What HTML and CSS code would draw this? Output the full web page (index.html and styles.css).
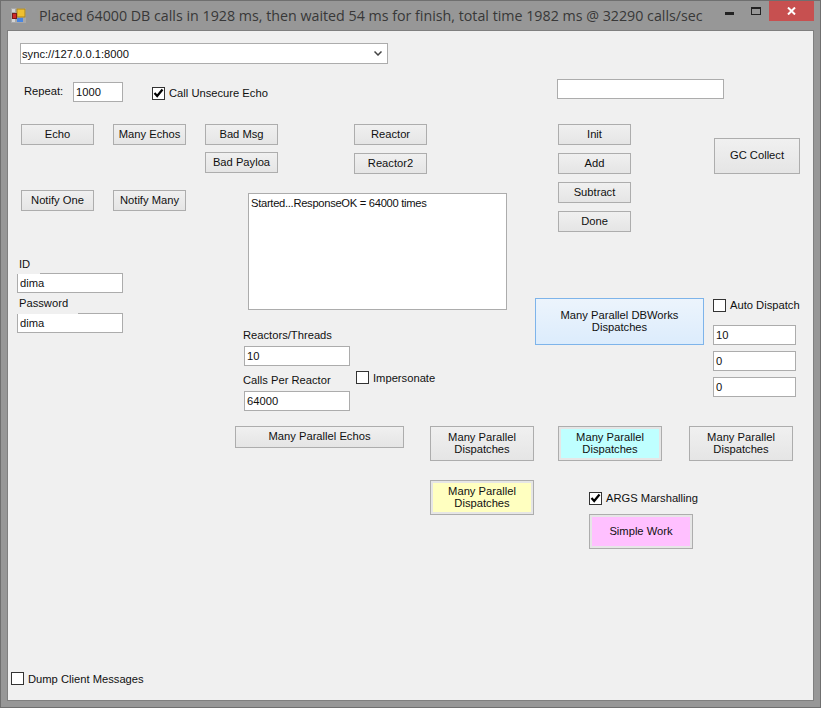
FILE: index.html
```html
<!DOCTYPE html>
<html lang="en">
<head>
    <meta charset="UTF-8">
    <title>DB calls</title>
    <link rel="stylesheet" href="styles.css">
</head>
<body>
    <div class="window">
        <div class="titlebar">
            <svg class="app-icon" width="15" height="15" viewBox="0 0 15 15">
                <rect x="0" y="0" width="15" height="15" fill="#a8a8a8"/>
                <rect x="1" y="1" width="3" height="3" fill="#d4d4d4"/>
                <rect x="1" y="11" width="3" height="3" fill="#d4d4d4"/>
                <rect x="6" y="11" width="3" height="3" fill="#4a86e0"/>
                <rect x="6" y="1" width="8" height="8" fill="#f0c030" stroke="#a88420" stroke-width="1"/>
                <rect x="1.5" y="5.5" width="4" height="5" fill="#d02828" stroke="#7a1a1a" stroke-width="1"/>
                <rect x="6" y="10" width="6" height="4" fill="#4a86e0"/>
            </svg>
            <span class="title-text">Placed 64000 DB calls in 1928 ms, then waited 54 ms for finish, total time 1982 ms @ 32290 calls/sec</span>
            <div class="caption-btns">
                <svg class="cap-min" width="9" height="3" viewBox="0 0 9 3"><rect width="9" height="3" fill="#222"/></svg>
                <svg class="cap-max" width="10" height="8" viewBox="0 0 10 8"><rect x="0.5" y="0.5" width="9" height="7" fill="none" stroke="#222"/><rect x="0" y="0" width="10" height="2" fill="#222"/></svg>
                <div class="cap-close">
                    <svg width="9" height="8" viewBox="0 0 9 8"><path d="M1 0.5 L8 7.5 M8 0.5 L1 7.5" stroke="#fff" stroke-width="2"/></svg>
                </div>
            </div>
        </div>

        <div class="client">
            <div class="combo">
                <span>sync://127.0.0.1:8000</span>
                <svg width="8" height="5" viewBox="0 0 8 5"><path d="M0.5 0.5 L4 4 L7.5 0.5" fill="none" stroke="#444" stroke-width="1.5"/></svg>
            </div>

            <div class="main">
                <div class="left-pane">
                    <div class="repeat-row">
                        <span class="repeat-label">Repeat:</span>
                        <input class="field repeat-input" type="text" value="1000">
                        <label class="check unsecure">
                            <span class="box"><svg width="11" height="10" viewBox="0 0 11 10"><path d="M1.5 5 L4.2 8 L9.5 1.5" fill="none" stroke="#000" stroke-width="2.2"/></svg></span>
                            Call Unsecure Echo
                        </label>
                    </div>

                    <div class="button-row">
                        <button class="btn small">Echo</button>
                        <button class="btn small">Many Echos</button>
                        <div class="stack bad">
                            <button class="btn small">Bad Msg</button>
                            <button class="btn small">Bad Payloa</button>
                        </div>
                        <div class="stack reactor">
                            <button class="btn small">Reactor</button>
                            <button class="btn small">Reactor2</button>
                        </div>
                    </div>

                    <div class="lower">
                        <div class="creds">
                            <div class="notify-row">
                                <button class="btn small">Notify One</button>
                                <button class="btn small">Notify Many</button>
                            </div>
                            <div class="cred-label first">ID</div>
                            <input class="field cred-input" type="text" value="dima">
                            <div class="cred-label pass">Password</div>
                            <input class="field cred-input" type="text" value="dima">
                        </div>
                        <div class="output">
                            <textarea class="log" readonly>Started...ResponseOK = 64000 times</textarea>
                            <div class="reactors">
                                <div>
                                    <div class="react-label">Reactors/Threads</div>
                                    <input class="field react-input" type="text" value="10">
                                    <div class="react-label second">Calls Per Reactor</div>
                                    <input class="field react-input" type="text" value="64000">
                                </div>
                                <label class="check impersonate"><span class="box"></span>Impersonate</label>
                            </div>
                        </div>
                    </div>
                </div>

                <div class="right-pane">
                    <input class="field top-input" type="text">
                    <div class="ops">
                        <div class="ops-col">
                            <button class="btn small">Init</button>
                            <button class="btn small">Add</button>
                            <button class="btn small">Subtract</button>
                            <button class="btn small">Done</button>
                        </div>
                        <button class="btn gc">GC Collect</button>
                    </div>
                    <div class="dbworks">
                        <button class="btn blue">Many Parallel DBWorks<br>Dispatches</button>
                        <div class="auto-col">
                            <label class="check auto"><span class="box"></span>Auto Dispatch</label>
                            <input class="field auto-input" type="text" value="10">
                            <input class="field auto-input" type="text" value="0">
                            <input class="field auto-input" type="text" value="0">
                        </div>
                    </div>
                </div>
            </div>

            <div class="parallel-row">
                <button class="btn wide">Many Parallel Echos</button>
                <button class="btn par">Many Parallel<br>Dispatches</button>
                <button class="btn par cyan">Many Parallel<br>Dispatches</button>
                <button class="btn par">Many Parallel<br>Dispatches</button>
            </div>

            <div class="work-row">
                <button class="btn par yellow">Many Parallel<br>Dispatches</button>
                <div class="work-col">
                    <label class="check args">
                        <span class="box"><svg width="11" height="10" viewBox="0 0 11 10"><path d="M1.5 5 L4.2 8 L9.5 1.5" fill="none" stroke="#000" stroke-width="2.2"/></svg></span>
                        ARGS Marshalling
                    </label>
                    <button class="btn par pink">Simple Work</button>
                </div>
            </div>

            <label class="check dump"><span class="box"></span>Dump Client Messages</label>
        </div>
    </div>
</body>
</html>
```

FILE: styles.css
```css
html, body {
    margin: 0;
    padding: 0;
}

body {
    width: 821px;
    height: 708px;
    overflow: hidden;
    font-family: 'Liberation Sans', Arial, sans-serif;
    font-size: 11.2px;
    color: #101010;
}

.window {
    box-sizing: border-box;
    width: 821px;
    height: 708px;
    background-color: #979797;
    border: 1px solid #6f6f6f;
    display: flex;
    flex-direction: column;
}

.titlebar {
    display: flex;
    align-items: flex-start;
    height: 29px;
    flex: none;
}

.app-icon {
    margin: 7px 0 0 10px;
}

.title-text {
    margin: 4px 0 0 13px;
    font-family: 'Open Sans', sans-serif;
    font-size: 14.25px;
    line-height: 22px;
    color: #383838;
    white-space: nowrap;
}

.caption-btns {
    margin-left: auto;
    margin-right: 6px;
    display: flex;
    align-items: flex-start;
}

.cap-min {
    margin: 11px 17px 0 0;
}

.cap-max {
    margin: 6px 8px 0 0;
}

.cap-close {
    width: 45px;
    height: 20px;
    background-color: #c75050;
    display: flex;
    align-items: center;
    justify-content: center;
}

.client {
    box-sizing: border-box;
    flex: none;
    width: 807px;
    height: 671px;
    margin-left: 6px;
    background-color: #f0f0f0;
    border: 1px solid #7f7f7f;
    display: flex;
    flex-direction: column;
}

.combo {
    box-sizing: border-box;
    width: 368px;
    height: 21px;
    margin: 12px 0 0 12px;
    padding: 0 5px 0 1px;
    background-color: #fff;
    border: 1px solid #acacac;
    display: flex;
    align-items: center;
    justify-content: space-between;
    flex: none;
}

.main {
    display: flex;
    margin-top: 15px;
    flex: none;
}

.left-pane {
    width: 527px;
    flex: none;
}

.field {
    box-sizing: border-box;
    display: block;
    margin: 0;
    padding: 0 2px;
    background-color: #fff;
    border: 1px solid #acacac;
    font-family: inherit;
    font-size: 11.2px;
    color: #101010;
    outline: none;
    height: 20px;
}

.btn {
    box-sizing: border-box;
    display: block;
    margin: 0;
    padding: 0 0 2px;
    font-family: inherit;
    font-size: 11.2px;
    line-height: 12px;
    color: #101010;
    border: 1px solid #adadad;
    background: linear-gradient(#f0f0f0, #e5e5e5);
    text-align: center;
}

.small {
    width: 73px;
    height: 21px;
}

.check {
    display: flex;
    align-items: center;
    white-space: nowrap;
}

.box {
    box-sizing: border-box;
    width: 13px;
    height: 13px;
    margin-right: 4px;
    flex: none;
    background-color: #fff;
    border: 1px solid #333;
    display: flex;
    align-items: center;
    justify-content: center;
}

.repeat-row {
    display: flex;
    align-items: center;
    margin-top: 3px;
    height: 20px;
    padding-left: 16px;
}

.repeat-label {
    width: 49px;
    margin-top: -2px;
}

.repeat-input {
    width: 50px;
}

.unsecure {
    margin: 2px 0 0 29px;
}

.button-row {
    display: flex;
    align-items: flex-start;
    margin-top: 22px;
    padding-left: 13px;
    height: 66px;
}

.button-row > .btn + .btn {
    margin-left: 19px;
}

.stack {
    display: flex;
    flex-direction: column;
    gap: 7px;
}

.bad {
    margin-left: 19px;
}

.reactor {
    margin-left: 76px;
    gap: 8px;
}

.lower {
    display: flex;
    padding-left: 9px;
}

.creds {
    width: 169px;
    flex: none;
}

.notify-row {
    display: flex;
    gap: 19px;
    padding-left: 4px;
}

/* the label sits a pixel over the field below it and hides its top border */
.cred-label {
    position: relative;
    width: fit-content;
    padding: 0 2px;
    height: 15px;
    line-height: 14px;
    margin-top: 3px;
    margin-bottom: -1px;
    background-color: #f0f0f0;
}

.cred-label.first {
    margin-top: 46px;
    height: 17px;
    padding-right: 10px;
}

.cred-label.pass {
    height: 18px;
    padding-right: 10px;
}

.cred-input {
    width: 106px;
}

.output {
    margin-left: 57px;
}

.log {
    box-sizing: border-box;
    display: block;
    width: 259px;
    height: 117px;
    margin: 3px 0 0 5px;
    padding: 3px 2px;
    font-family: inherit;
    font-size: 11.2px;
    letter-spacing: -0.3px;
    color: #101010;
    background-color: #fff;
    border: 1px solid #acacac;
    resize: none;
    overflow: hidden;
    outline: none;
}

.reactors {
    display: flex;
    align-items: flex-start;
}

.react-label {
    height: 14px;
    line-height: 14px;
    margin-top: 18px;
}

.react-label.second {
    margin-top: 7px;
}

.react-input {
    width: 106px;
    margin: 4px 0 0 1px;
}

.impersonate {
    margin: 61px 0 0 6px;
}

.right-pane {
    flex: 1;
}

.top-input {
    width: 167px;
    margin-left: 22px;
}

.ops {
    display: flex;
    align-items: flex-start;
    margin-top: 25px;
    padding-left: 23px;
}

.ops-col {
    display: flex;
    flex-direction: column;
    gap: 8px;
}

.gc {
    width: 86px;
    height: 36px;
    margin: 14px 0 0 83px;
}

.dbworks {
    display: flex;
    align-items: flex-start;
    margin-top: 66px;
}

.blue {
    width: 169px;
    height: 47px;
    border-color: #7eb4ea;
    background: linear-gradient(#ecf4fc, #dcecfc);
}

.auto-col {
    margin-left: 9px;
}

.auto {
    height: 14px;
    margin-bottom: 13px;
}

.auto-input {
    width: 83px;
    margin-bottom: 6px;
}

.parallel-row {
    display: flex;
    align-items: flex-start;
    margin: 15px 0 0 227px;
    flex: none;
}

.wide {
    width: 169px;
    height: 22px;
}

.par {
    width: 104px;
    height: 35px;
}

.parallel-row .par {
    margin-left: 24px;
}

.parallel-row .wide + .par {
    margin-left: 26px;
}

.parallel-row .cyan + .par {
    margin-left: 27px;
}

.cyan,
.yellow,
.pink {
    box-shadow: inset 0 0 0 2px #e6e6e6;
}

.cyan {
    background: #bfffff;
}

.yellow {
    background: #ffffc0;
}

.pink {
    background: #ffc0ff;
}

.work-row {
    display: flex;
    align-items: flex-start;
    margin: 19px 0 0 422px;
    flex: none;
}

.work-col {
    margin-left: 55px;
}

.args {
    margin-top: 11px;
    height: 14px;
}

.args + .pink {
    margin-top: 9px;
}

.dump {
    margin: auto 0 15px 3px;
    flex: none;
}
```
